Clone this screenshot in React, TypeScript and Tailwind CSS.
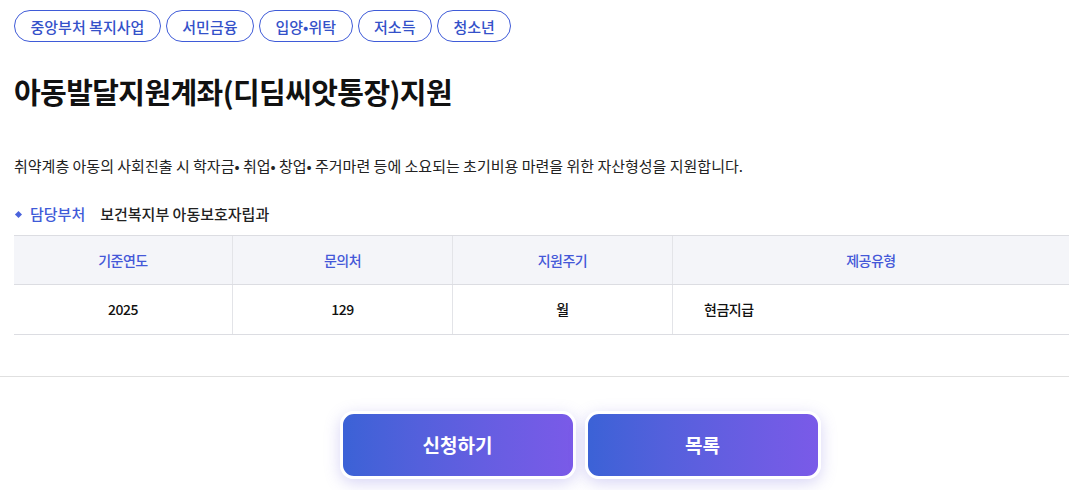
const tags = ["중앙부처 복지사업", "서민금융", "입양•위탁", "저소득", "청소년"];

const font = {
  fontFamily: '"Noto Sans CJK KR", "Noto Sans", sans-serif',
};

export default function App() {
  return (
    <div className="w-[1069px] h-[490px] overflow-hidden bg-white" style={font}>
      <div className="pl-[14px] pt-[10px]">
        <div className="flex gap-[5px]">
          {tags.map((t) => (
            <span
              key={t}
              className="h-[32px] px-[15.5px] flex items-center rounded-full border border-[#3f5bd8] text-[#3451c9] text-[15px] font-medium leading-none"
            >
              {t}
            </span>
          ))}
        </div>

        <h1 className="mt-[29px] text-[29px] font-bold text-[#111] leading-[40px] tracking-[-0.6px]">
          아동발달지원계좌(디딤씨앗통장)지원
        </h1>

        <p className="mt-[44px] text-[15px] text-[#222] leading-[22px]">
          취약계층 아동의 사회진출 시 학자금• 취업• 창업• 주거마련 등에 소요되는 초기비용 마련을 위한 자산형성을 지원합니다.
        </p>

        <div className="mt-[27px] flex items-center text-[15px] leading-[20px]">
          <span className="w-[5px] h-[5px] bg-[#4a63dc] rotate-45 ml-[2px] mr-[9px]" />
          <span className="text-[#3f5bd8] font-medium">담당부처</span>
          <span className="ml-[15px] text-[#222] font-medium">보건복지부 아동보호자립과</span>
        </div>

        <div className="mt-[11px] border-t border-[#dcdde2]">
          <div className="flex h-[49px] bg-[#f4f5f9] border-b border-[#dcdde2] text-[14px] font-medium text-[#4458d8] tracking-[-0.5px]">
            <div className="w-[219px] flex items-center justify-center border-r border-[#e3e4e8]">기준연도</div>
            <div className="w-[220px] flex items-center justify-center border-r border-[#e3e4e8]">문의처</div>
            <div className="w-[220px] flex items-center justify-center border-r border-[#e3e4e8]">지원주기</div>
            <div className="flex-1 flex items-center justify-center">제공유형</div>
          </div>
          <div className="flex h-[50px] border-b border-[#dcdde2] text-[14px] font-medium text-[#111] tracking-[-0.5px]">
            <div className="w-[219px] flex items-center justify-center border-r border-[#e3e4e8]">2025</div>
            <div className="w-[220px] flex items-center justify-center border-r border-[#e3e4e8]">129</div>
            <div className="w-[220px] flex items-center justify-center border-r border-[#e3e4e8]">월</div>
            <div className="flex-1 flex items-center pl-[31px]">현금지급</div>
          </div>
        </div>
      </div>

      <div className="mt-[41px] border-t border-[#e0e0e0]" />

      <div className="mt-[34px] flex justify-center gap-[9px] pl-[91px]">
        <button className="w-[236px] h-[68px] rounded-[14px] border-[3px] border-white bg-gradient-to-r from-[#3b62d6] to-[#7a5ae8] text-white text-[19px] font-bold shadow-[0_4px_16px_rgba(110,100,220,0.28)]">
          신청하기
        </button>
        <button className="w-[236px] h-[68px] rounded-[14px] border-[3px] border-white bg-gradient-to-r from-[#3b62d6] to-[#7a5ae8] text-white text-[19px] font-bold shadow-[0_4px_16px_rgba(110,100,220,0.28)]">
          목록
        </button>
      </div>
    </div>
  );
}
